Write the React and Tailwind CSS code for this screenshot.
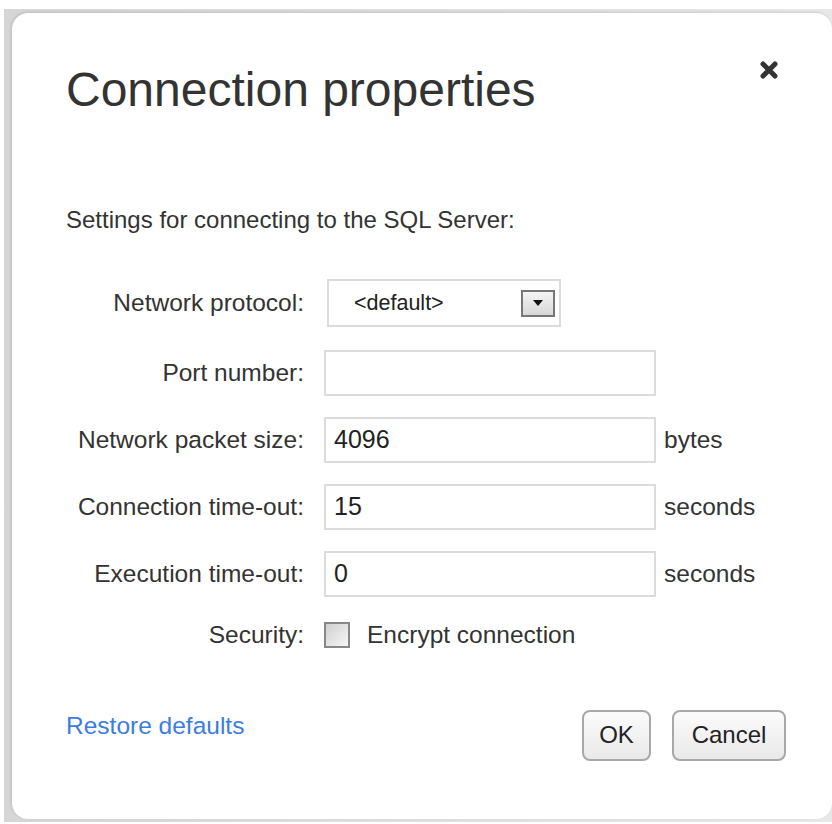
import { useState } from "react";

const font = { fontFamily: '"Liberation Sans", Arial, sans-serif' };

function CloseIcon() {
  return (
    <svg width="22" height="22" viewBox="0 0 22 22" className="text-[#333]">
      <path d="M5 5 L17 17 M17 5 L5 17" stroke="currentColor" strokeWidth="5" strokeLinecap="round" />
    </svg>
  );
}

function Row({ label, children }) {
  return (
    <div className="flex items-center">
      <div className="w-[238px] shrink-0 text-right text-[24.5px] text-[#333]">{label}</div>
      {children}
    </div>
  );
}

function TextField({ value, unit }) {
  return (
    <>
      <div className="ml-5 flex h-[46px] w-[332px] items-center border-2 border-[#dcdcdc] bg-white px-2 text-[25px] text-[#222]">
        {value}
      </div>
      {unit && <span className="ml-2 text-[24.5px] text-[#333]">{unit}</span>}
    </>
  );
}

export default function App() {
  const [encrypt, setEncrypt] = useState(false);

  return (
    <div className="h-[824px] w-[832px] overflow-hidden bg-white pl-1 pt-[9px]" style={font}>
      {/* dialog frame */}
      <div className="h-[813px] w-[828px] bg-[linear-gradient(to_right,#d6d6d6,#e8e8e8)] pb-[3px] pl-2 pt-1">
        <div className="relative h-full w-[820px] rounded-[16px] bg-white pl-[54px] pr-[46px] pt-[49px] shadow-[-1px_-1px_3px_rgba(0,0,0,0.12)]">
          <button className="absolute right-[52px] top-[46px]" aria-label="Close">
            <CloseIcon />
          </button>

          <h1 className="text-[48px] leading-[56px] text-[#333]">Connection properties</h1>

          <p className="mt-[84px] text-[24px] text-[#333]">Settings for connecting to the SQL Server:</p>

          <div className="mt-[41px] flex flex-col">
            <Row label="Network protocol:">
              <div className="ml-[23px] flex h-[48px] w-[234px] items-center justify-between border-2 border-[#dcdcdc] pl-[25px] pr-[4px] text-[21.5px] text-[#222]">
                <span>&lt;default&gt;</span>
                <div className="flex h-[27px] w-[34px] items-center justify-center border-2 border-[#777] bg-[linear-gradient(#f4f4f4,#d8d8d8)]">
                  <svg width="10" height="6" viewBox="0 0 10 6">
                    <path d="M0 0 H10 L5 6 Z" fill="#111" />
                  </svg>
                </div>
              </div>
            </Row>
            <div className="mt-[23px]">
              <Row label="Port number:">
                <TextField value="" />
              </Row>
            </div>
            <div className="mt-[21px]">
              <Row label="Network packet size:">
                <TextField value="4096" unit="bytes" />
              </Row>
            </div>
            <div className="mt-[21px]">
              <Row label="Connection time-out:">
                <TextField value="15" unit="seconds" />
              </Row>
            </div>
            <div className="mt-[21px]">
              <Row label="Execution time-out:">
                <TextField value="0" unit="seconds" />
              </Row>
            </div>
            <div className="mt-[20px]">
              <Row label="Security:">
                <button
                  onClick={() => setEncrypt(!encrypt)}
                  className="ml-5 flex h-[26px] w-[26px] items-center justify-center border-2 border-[#888] bg-[linear-gradient(135deg,#d0d0d0,#f6f6f6)]"
                  aria-label="Encrypt connection"
                >
                  {encrypt && <span className="text-[16px] leading-none">✓</span>}
                </button>
                <span className="ml-[17px] text-[24.5px] text-[#333]">Encrypt connection</span>
              </Row>
            </div>
          </div>

          <div className="mt-[52px] flex items-start justify-between">
            <a className="mt-[2px] text-[24.5px] text-[#3b7de0]">Restore defaults</a>
            <div className="flex gap-[21px] pt-[4px]">
              <button className="h-[51px] w-[69px] rounded-[8px] border-2 border-[#a8a8a8] bg-[linear-gradient(#fbfbfb,#e9e9e9)] text-[24px] text-[#222]">
                OK
              </button>
              <button className="h-[51px] w-[114px] rounded-[8px] border-2 border-[#a8a8a8] bg-[linear-gradient(#fbfbfb,#e9e9e9)] text-[24px] text-[#222]">
                Cancel
              </button>
            </div>
          </div>
        </div>
      </div>
    </div>
  );
}
